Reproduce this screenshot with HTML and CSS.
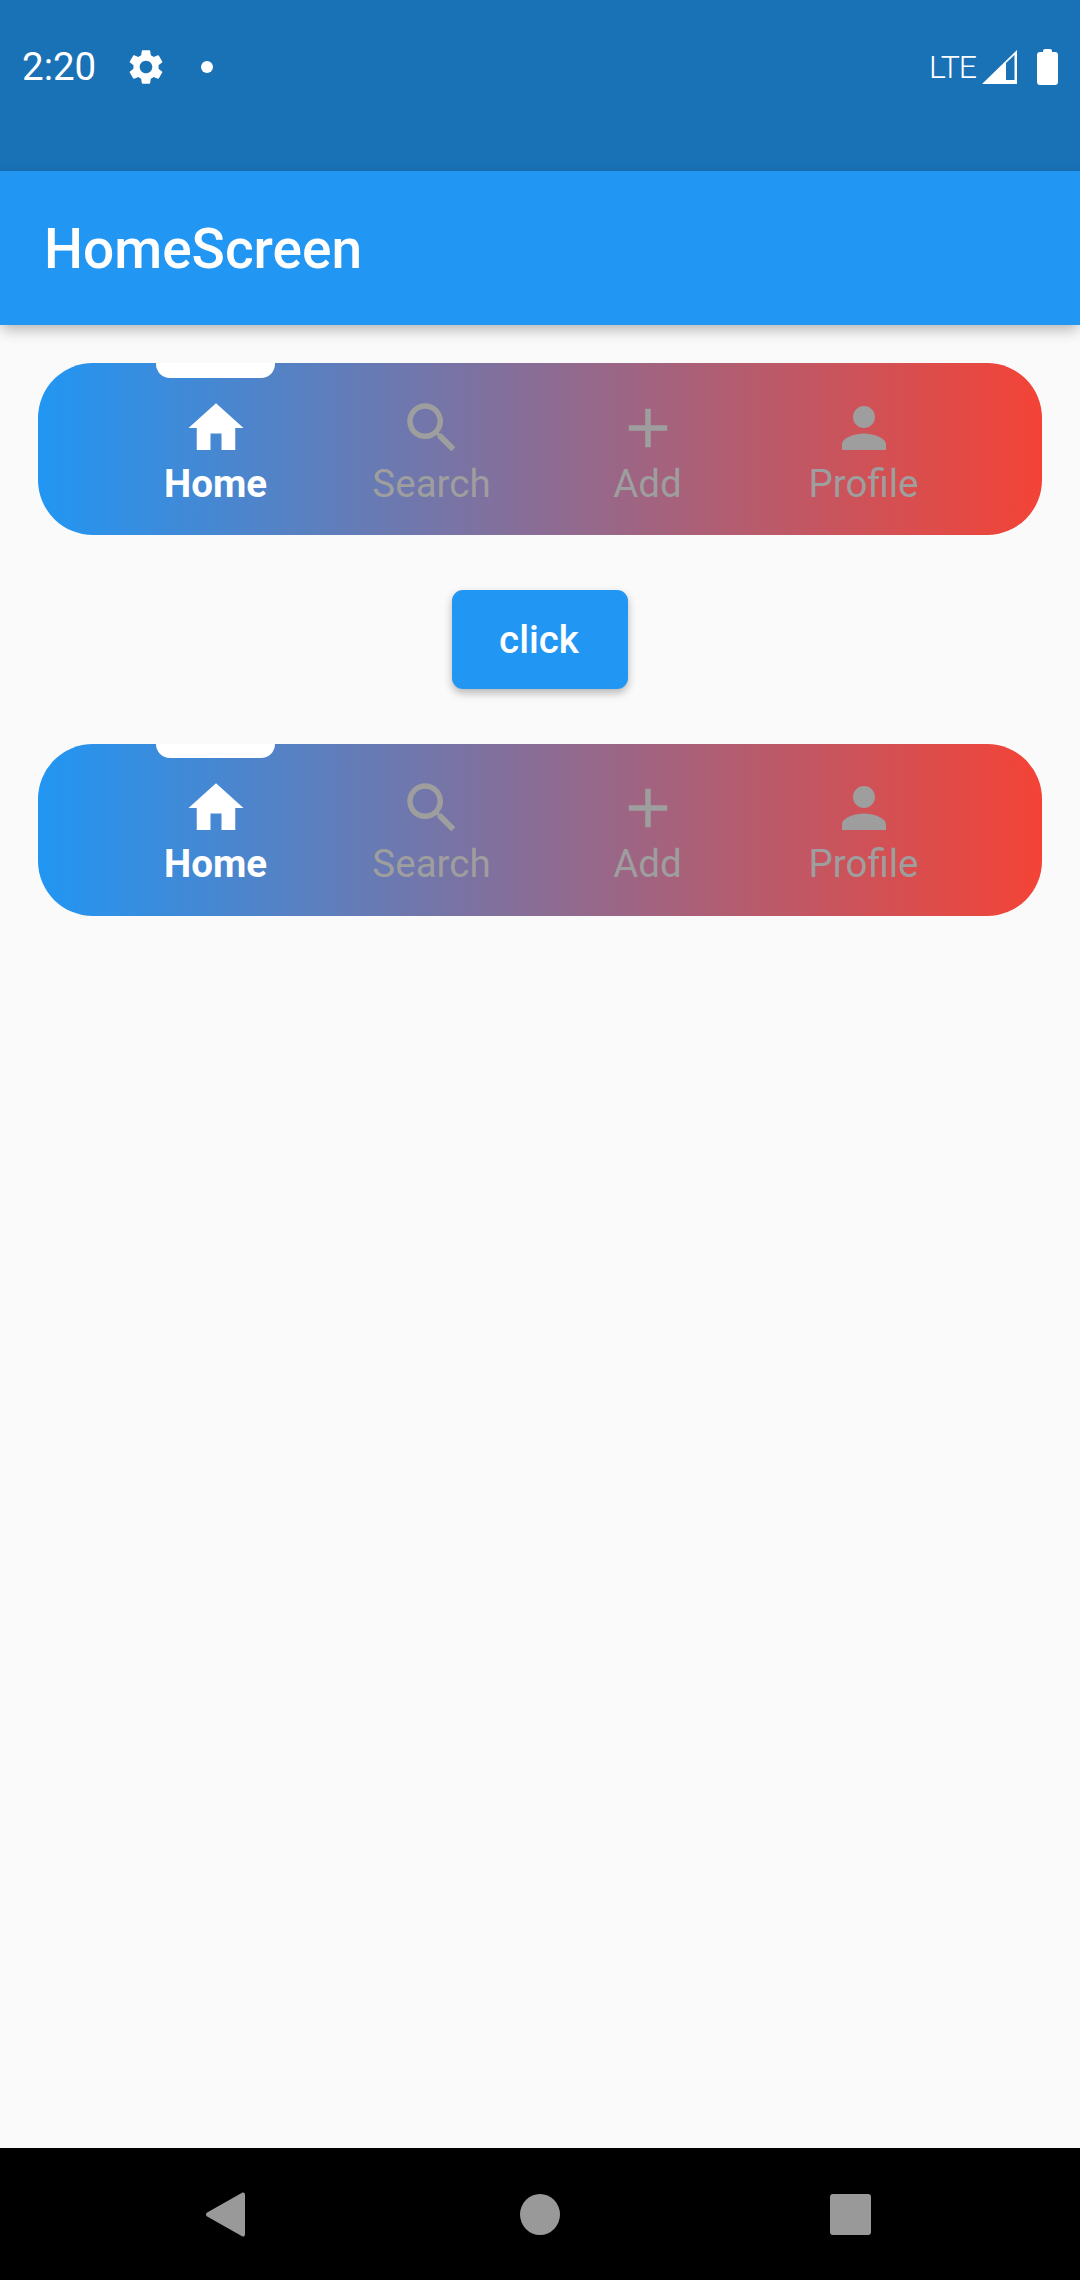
FILE: index.html
```html
<!DOCTYPE html>
<html lang="en">
<head>
<meta charset="utf-8">
<title>HomeScreen</title>
<link rel="stylesheet" href="styles.css">
</head>
<body>
<div class="screen">
  <div class="status">
    <div class="status-row">
      <span class="time">2:20</span>
      <svg class="gear" viewBox="0 0 24 24"><path d="M19.14 12.94c.04-.3.06-.61.06-.94 0-.32-.02-.64-.07-.94l2.03-1.58a.49.49 0 0 0 .12-.61l-1.92-3.32a.488.488 0 0 0-.59-.22l-2.39.96c-.5-.38-1.03-.7-1.62-.94l-.36-2.54a.484.484 0 0 0-.48-.41h-3.84c-.24 0-.43.17-.47.41l-.36 2.54c-.59.24-1.13.57-1.62.94l-2.39-.96c-.22-.08-.47 0-.59.22L2.74 8.87c-.12.21-.08.47.12.61l2.03 1.58c-.05.3-.09.63-.09.94s.02.64.07.94l-2.03 1.58a.49.49 0 0 0-.12.61l1.92 3.32c.12.22.37.29.59.22l2.39-.96c.5.38 1.03.7 1.62.94l.36 2.54c.05.24.24.41.48.41h3.84c.24 0 .44-.17.47-.41l.36-2.54c.59-.24 1.13-.56 1.62-.94l2.39.96c.22.08.47 0 .59-.22l1.92-3.32c.12-.22.07-.47-.12-.61l-2.01-1.58zM12 15.6c-1.98 0-3.6-1.62-3.6-3.6s1.62-3.6 3.6-3.6 3.6 1.62 3.6 3.6-1.62 3.6-3.6 3.6z"/></svg>
      <span class="dot"></span>
      <span class="spacer"></span>
      <span class="lte">LTE</span>
      <svg class="signal" viewBox="0 0 35 34"><path fill-rule="evenodd" d="M35 0V34H0ZM24 13V30H32.500V5Z"/></svg>
      <svg class="battery" viewBox="0 0 21 36"><path d="M6 2a2 2 0 0 1 2-2h5a2 2 0 0 1 2 2v1h3a3 3 0 0 1 3 3v27a3 3 0 0 1-3 3H3a3 3 0 0 1-3-3V6a3 3 0 0 1 3-3h3z"/></svg>
    </div>
  </div>
  <header class="appbar"><h1 class="title">HomeScreen</h1></header>
  <main class="content">
    <nav class="tabs">
      <span class="indicator"></span>
      <div class="tab tab-active">
        <svg class="tab-icon" viewBox="0 0 24 24"><path d="M10 20v-6h4v6h5v-8h3L12 3 2 12h3v8z"/></svg>
        <span class="tab-label">Home</span>
      </div>
      <div class="tab">
        <svg class="tab-icon" viewBox="0 0 24 24"><path d="M15.5 14h-.79l-.28-.27C15.41 12.59 16 11.11 16 9.5 16 5.91 13.09 3 9.5 3S3 5.91 3 9.5 5.91 16 9.5 16c1.61 0 3.09-.59 4.23-1.57l.27.28v.79l5 4.99L20.49 19l-4.99-5zm-6 0C7.01 14 5 11.99 5 9.5S7.01 5 9.5 5 14 7.01 14 9.5 11.99 14 9.5 14z"/></svg>
        <span class="tab-label">Search</span>
      </div>
      <div class="tab">
        <svg class="tab-icon" viewBox="0 0 24 24"><path d="M19 13h-6v6h-2v-6H5v-2h6V5h2v6h6v2z"/></svg>
        <span class="tab-label">Add</span>
      </div>
      <div class="tab">
        <svg class="tab-icon" viewBox="0 0 24 24"><path d="M12 12c2.21 0 4-1.79 4-4s-1.79-4-4-4-4 1.79-4 4 1.79 4 4 4zm0 2c-2.67 0-8 1.34-8 4v2h16v-2c0-2.66-5.33-4-8-4z"/></svg>
        <span class="tab-label">Profile</span>
      </div>
    </nav>
    <button class="click-btn" type="button">click</button>
    <nav class="tabs">
      <span class="indicator"></span>
      <div class="tab tab-active">
        <svg class="tab-icon" viewBox="0 0 24 24"><path d="M10 20v-6h4v6h5v-8h3L12 3 2 12h3v8z"/></svg>
        <span class="tab-label">Home</span>
      </div>
      <div class="tab">
        <svg class="tab-icon" viewBox="0 0 24 24"><path d="M15.5 14h-.79l-.28-.27C15.41 12.59 16 11.11 16 9.5 16 5.91 13.09 3 9.5 3S3 5.91 3 9.5 5.91 16 9.5 16c1.61 0 3.09-.59 4.23-1.57l.27.28v.79l5 4.99L20.49 19l-4.99-5zm-6 0C7.01 14 5 11.99 5 9.5S7.01 5 9.5 5 14 7.01 14 9.5 11.99 14 9.5 14z"/></svg>
        <span class="tab-label">Search</span>
      </div>
      <div class="tab">
        <svg class="tab-icon" viewBox="0 0 24 24"><path d="M19 13h-6v6h-2v-6H5v-2h6V5h2v6h6v2z"/></svg>
        <span class="tab-label">Add</span>
      </div>
      <div class="tab">
        <svg class="tab-icon" viewBox="0 0 24 24"><path d="M12 12c2.21 0 4-1.79 4-4s-1.79-4-4-4-4 1.79-4 4 1.79 4 4 4zm0 2c-2.67 0-8 1.34-8 4v2h16v-2c0-2.66-5.33-4-8-4z"/></svg>
        <span class="tab-label">Profile</span>
      </div>
    </nav>
  </main>
  <footer class="sysnav">
    <svg class="sys-back" viewBox="0 0 40 46"><path d="M37 .8 1.2 21a2.300 2.300 0 0 0 0 4L37 45.200c1.400.8 3-.2 3-1.800V2.600C40 1 38.400 0 37 .8z"/></svg>
    <span class="sys-home"></span>
    <span class="sys-recent"></span>
  </footer>
</div>
</body>
</html>
```

FILE: styles.css
```css
* {
  box-sizing: border-box;
}

html,
body {
  margin: 0;
  padding: 0;
}

body {
  font-family: Roboto, "Liberation Sans", sans-serif;
}

.screen {
  width: 1080px;
  height: 2280px;
  display: flex;
  flex-direction: column;
  background: #fafafa;
  overflow: hidden;
}

.status {
  height: 171px;
  flex: none;
  padding-bottom: 37px;
  background: #1971b6;
  color: #fff;
}

.status-row {
  height: 134px;
  display: flex;
  align-items: center;
  padding: 0 22px;
  fill: #fff;
}

.time {
  font-size: 38.5px;
  font-weight: 400;
  line-height: 1;
}

.gear {
  width: 42px;
  height: 42px;
  margin-left: 29px;
}

.dot {
  width: 12px;
  height: 12px;
  margin-left: 34px;
  border-radius: 50%;
  background: #fff;
}

.spacer {
  flex: 1;
}

.lte {
  font-size: 32px;
  font-weight: 300;
  letter-spacing: -1px;
  line-height: 1;
}

.signal {
  width: 35px;
  height: 34px;
  margin-left: 6px;
}

.battery {
  width: 21px;
  height: 36px;
  margin-left: 20px;
}

.appbar {
  height: 154px;
  flex: none;
  position: relative;
  display: flex;
  align-items: center;
  padding: 2px 0 0 44px;
  background: #2196f3;
  box-shadow: 0 6px 14px -2px rgba(0, 0, 0, 0.3);
}

.title {
  margin: 0;
  font-size: 55px;
  font-weight: 500;
  color: #fff;
}

.content {
  flex: 1;
  display: flex;
  flex-direction: column;
  align-items: center;
  padding: 38.4px 38px 0;
}

.tabs {
  position: relative;
  width: 1004px;
  height: 172px;
  flex: none;
  display: flex;
  padding: 31.6px 70px 0;
  border-radius: 55px;
  background: linear-gradient(90deg, #2196f3, #f44336);
}

.indicator {
  position: absolute;
  top: 0;
  left: 118px;
  width: 119px;
  height: 14.3px;
  border-radius: 0 0 14px 14px;
  background: #fff;
}

.tab {
  width: 216px;
  display: flex;
  flex-direction: column;
  align-items: center;
  color: #9e9e9e;
  fill: #9e9e9e;
}

.tab-active {
  color: #fff;
  fill: #fff;
}

.tab-icon {
  width: 66px;
  height: 66px;
  display: block;
}

.tab-label {
  margin-right: 1px;
  font-size: 38.5px;
  line-height: 45px;
}

.tab-active .tab-label {
  font-weight: 700;
}

.click-btn {
  width: 176px;
  height: 99px;
  flex: none;
  margin: 54.6px 0;
  padding: 0 2px 0 0;
  border: 0;
  border-radius: 11px;
  background: #2196f3;
  color: #fff;
  font-family: inherit;
  font-size: 38.5px;
  font-weight: 500;
  box-shadow: 0 4px 8px rgba(0, 0, 0, 0.28);
}

.sysnav {
  height: 132px;
  flex: none;
  display: flex;
  align-items: center;
  padding-left: 206px;
  background: #000;
}

.sys-back {
  width: 39px;
  height: 45px;
  fill: #999;
}

.sys-home {
  width: 40px;
  height: 41px;
  margin-left: 275px;
  border-radius: 50%;
  background: #999;
}

.sys-recent {
  width: 41px;
  height: 41px;
  margin-left: 270px;
  border-radius: 3px;
  background: #999;
}
```
